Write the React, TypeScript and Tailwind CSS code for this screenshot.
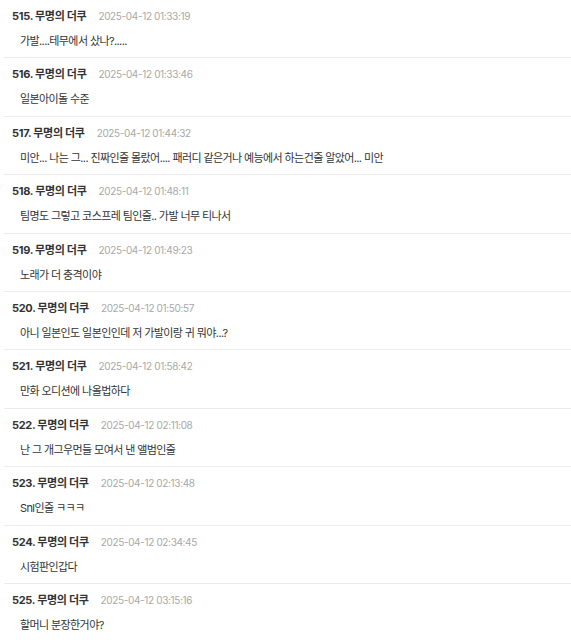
const comments = [
  { no: 515, date: '2025-04-12 01:33:19', text: '가발....테무에서 샀나?.....' },
  { no: 516, date: '2025-04-12 01:33:46', text: '일본아이돌 수준' },
  { no: 517, date: '2025-04-12 01:44:32', text: '미안... 나는 그... 진짜인줄 몰랐어.... 패러디 같은거나 예능에서 하는건줄 알았어... 미안' },
  { no: 518, date: '2025-04-12 01:48:11', text: '팀명도 그렇고 코스프레 팀인줄.. 가발 너무 티나서' },
  { no: 519, date: '2025-04-12 01:49:23', text: '노래가 더 충격이야' },
  { no: 520, date: '2025-04-12 01:50:57', text: '아니 일본인도 일본인인데 저 가발이랑 귀 뭐야...?' },
  { no: 521, date: '2025-04-12 01:58:42', text: '만화 오디션에 나올법하다' },
  { no: 522, date: '2025-04-12 02:11:08', text: '난 그 개그우먼들 모여서 낸 앨범인줄' },
  { no: 523, date: '2025-04-12 02:13:48', text: 'Snl인줄 ㅋㅋㅋ' },
  { no: 524, date: '2025-04-12 02:34:45', text: '시험판인갑다' },
  { no: 525, date: '2025-04-12 03:15:16', text: '할머니 분장한거야?' },
];

const CommentItem = ({ no, date, text }: { no: number; date: string; text: string }) => (
  <li className="border-b border-[#ececec] pt-[9px] pb-[9.4px] pl-2">
    <div className="flex items-center gap-3 leading-[14px]">
      <span className="text-[11px] font-bold tracking-[-0.3px] text-[#333]">{no}. 무명의 더쿠</span>
      <span className="text-[10px] tracking-[-0.35px] text-[#a8a8a8]">{date}</span>
    </div>
    <p className="mt-[11px] pl-2 text-[11px] leading-[14px] tracking-[-0.6px] text-[#333]">{text}</p>
  </li>
);

export default function App() {
  return (
    <div
      className="min-h-screen bg-white pl-1"
      style={{ fontFamily: 'Inter, "Noto Sans CJK KR", sans-serif' }}
    >
      <ul>
        {comments.map((c) => (
          <CommentItem key={c.no} {...c} />
        ))}
      </ul>
    </div>
  );
}
